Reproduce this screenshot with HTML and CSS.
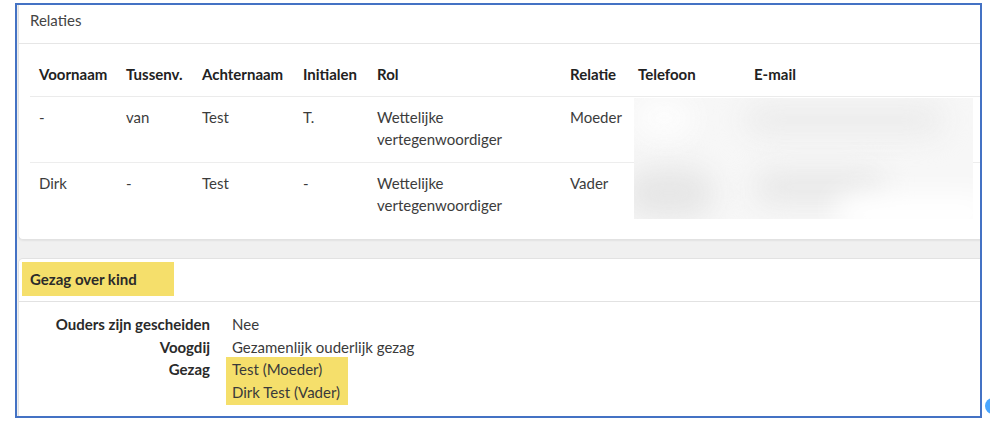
FILE: index.html
```html
<!DOCTYPE html>
<html lang="nl">
<head>
<meta charset="utf-8">
<title>Relaties</title>
<link rel="stylesheet" href="styles.css">
</head>
<body>
<div class="frame">
  <section class="card card-relaties">
    <header class="card-header">Relaties</header>
    <div class="card-body">
      <div class="table-wrap">
        <table class="rel-table">
          <colgroup>
            <col class="c-voornaam"><col class="c-tussenv"><col class="c-achternaam"><col class="c-initialen">
            <col class="c-rol"><col class="c-relatie"><col class="c-telefoon"><col class="c-email">
          </colgroup>
          <thead>
            <tr>
              <th>Voornaam</th><th>Tussenv.</th><th>Achternaam</th><th>Initialen</th>
              <th>Rol</th><th>Relatie</th><th>Telefoon</th><th>E-mail</th>
            </tr>
          </thead>
          <tbody>
            <tr>
              <td>-</td><td>van</td><td>Test</td><td>T.</td>
              <td>Wettelijke<br>vertegenwoordiger</td><td>Moeder</td><td></td><td></td>
            </tr>
            <tr>
              <td>Dirk</td><td>-</td><td>Test</td><td>-</td>
              <td>Wettelijke<br>vertegenwoordiger</td><td>Vader</td><td></td><td></td>
            </tr>
          </tbody>
        </table>
        <!-- privacy blur over the contact columns -->
        <div class="redacted">
          <span class="smudge s1"></span>
          <span class="smudge s2"></span>
          <span class="smudge s3"></span>
          <span class="smudge s4"></span>
          <span class="smudge s5"></span>
        </div>
      </div>
    </div>
  </section>

  <section class="card card-gezag">
    <header class="gezag-header"><span class="marker marker-title">Gezag over kind</span></header>
    <dl class="facts">
      <dt>Ouders zijn gescheiden</dt><dd>Nee</dd>
      <dt>Voogdij</dt><dd>Gezamenlijk ouderlijk gezag</dd>
      <dt>Gezag</dt><dd><span class="marker marker-values">Test (Moeder)<br>Dirk Test (Vader)</span></dd>
    </dl>
  </section>
</div>
<span class="chat-dot"></span>
</body>
</html>
```

FILE: styles.css
```css
html, body {
  margin: 0;
  padding: 0;
  background: #ffffff;
}

body {
  font-family: Lato, "Noto Sans", sans-serif;
  font-size: 15px;
  line-height: 22.5px;
  color: #3a3a3a;
  width: 990px;
  height: 424px;
  overflow: hidden;
  position: relative;
}

.frame {
  box-sizing: border-box;
  width: 967px;
  height: 415px;
  margin: 3px 0 0 15px;
  border: 2px solid #4472c4;
  background: #f0f0f0;
  padding-left: 1px;
  overflow: hidden;
}

.card {
  background: #ffffff;
  width: 1000px;
  box-sizing: border-box;
  border: 1px solid #e2e2e2;
}

.card-relaties {
  border-top: none;
  height: 235px;
  border-radius: 0 0 0 5px;
  box-shadow: 0 1px 2px rgba(0, 0, 0, 0.06);
}

.card-header {
  box-sizing: border-box;
  height: 39px;
  padding: 4px 11px 0;
  border-bottom: 1px solid #e6e6e6;
  color: #444;
}

.card-body {
  padding: 10px 0 0 11px;
}

.table-wrap {
  position: relative;
}

.rel-table {
  border-collapse: collapse;
  table-layout: fixed;
  width: 950px;
}

.c-voornaam { width: 87px; }
.c-tussenv { width: 76px; }
.c-achternaam { width: 101px; }
.c-initialen { width: 74px; }
.c-rol { width: 193px; }
.c-relatie { width: 68px; }
.c-telefoon { width: 116px; }
.c-email { width: 235px; }

.rel-table th,
.rel-table td {
  text-align: left;
  vertical-align: top;
  padding: 9px 9px 10px;
}

.rel-table th {
  font-weight: 700;
  color: #222;
  border-bottom: 1px solid #ebebeb;
}

.rel-table td {
  padding: 9px 9px 11px;
  color: #3c3c3c;
}

.rel-table tbody tr:first-child td {
  border-bottom: 1px solid #ededed;
}

.rel-table tbody tr:last-child td {
  padding-bottom: 12px;
}

/* blurred contact details */
.redacted {
  position: absolute;
  left: 604px;
  top: 44px;
  width: 339px;
  height: 121px;
  background: #f7f7f7;
  overflow: hidden;
}

.smudge {
  position: absolute;
  display: block;
  border-radius: 30px;
  background: #e9e9e9;
  filter: blur(14px);
}

.s1 { left: 110px; top: 6px; width: 200px; height: 32px; background: #ececec; }
.s2 { left: -10px; top: 70px; width: 90px; height: 50px; background: #e6e6e6; }
.s3 { left: 120px; top: 72px; width: 130px; height: 34px; background: #e8e8e8; }
.s4 { left: 200px; top: 95px; width: 160px; height: 40px; background: #ffffff; }
.s5 { left: 0px; top: 0px; width: 60px; height: 40px; background: #fdfdfd; }

.card-gezag {
  margin-top: 18px;
  height: 200px;
  border-radius: 5px 0 0 0;
  border-bottom: none;
}

.gezag-header {
  box-sizing: border-box;
  height: 43px;
  padding: 3px 0 0 3px;
  border-bottom: 1px solid #e2e2e2;
}

.marker {
  background: #f5df6b;
}

.marker-title {
  display: block;
  box-sizing: border-box;
  width: 152px;
  height: 34px;
  line-height: 34px;
  padding-left: 8px;
  font-weight: 700;
  color: #2a2a2a;
}

.facts {
  display: grid;
  grid-template-columns: 191px auto;
  column-gap: 22px;
  margin: 0;
  padding: 11px 0 0;
}

.facts dt {
  text-align: right;
  font-weight: 700;
  color: #2a2a2a;
}

.facts dd {
  margin: 0;
  color: #3a3a3a;
}

.marker-values {
  display: inline-block;
  margin-left: -6px;
  padding: 1px 8px 2px 6px;
  margin-top: -1px;
}

.chat-dot {
  position: absolute;
  left: 985px;
  top: 398px;
  width: 16px;
  height: 16px;
  border-radius: 50%;
  background: #4aa6ff;
}
```
